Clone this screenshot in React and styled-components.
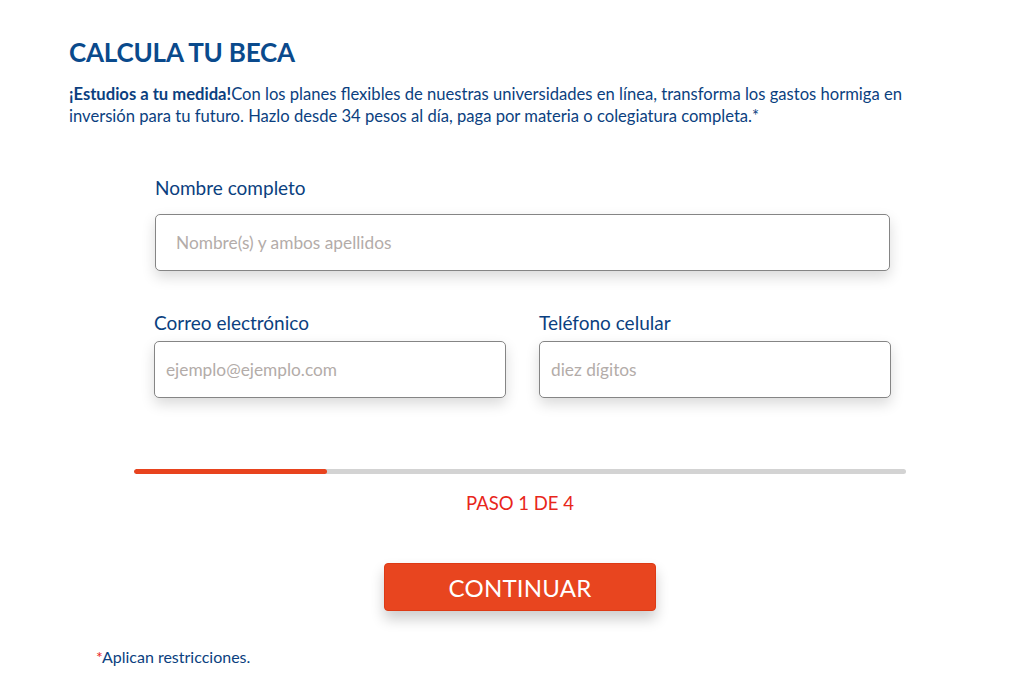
import React from "react";
import styled, { createGlobalStyle } from "styled-components";

const Global = createGlobalStyle`
  html, body { margin: 0; padding: 0; background: #ffffff; }
  body { font-family: Lato, "Open Sans", sans-serif; }
  * { box-sizing: border-box; }
`;

const Page = styled.main`
  width: 902px;
  margin-left: 69px;
  padding-top: 36px;
  padding-bottom: 20px;
`;

const Title = styled.h1`
  margin: 0;
  font-size: 26px;
  line-height: 32px;
  font-weight: 700;
  color: #0a4a8c;
  letter-spacing: -0.2px;
`;

const Intro = styled.p`
  margin: 15px 0 0;
  max-width: 850px;
  font-size: 16.6px;
  line-height: 22px;
  color: #0b3f80;
  b { font-weight: 700; }
`;

const Form = styled.form`
  width: 737px;
  margin: 48px 0 0 85px;
  display: flex;
  flex-direction: column;
  gap: 39px;
`;

const Row = styled.div`
  display: grid;
  grid-template-columns: ${(p) => (p.$cols === 2 ? "1fr 1fr" : "1fr")};
  column-gap: 33px;
`;

const Field = styled.label`
  display: flex;
  flex-direction: column;
  gap: ${(p) => (p.$wide ? "14px" : "6px")};
  padding-left: ${(p) => (p.$wide ? "1px" : "0")};
  padding-right: ${(p) => (p.$wide ? "1px" : "0")};
`;

const Label = styled.span`
  font-size: 19px;
  line-height: 25px;
  color: #0b3f80;
`;

const Input = styled.input`
  height: 57px;
  width: 100%;
  border: 1px solid #858585;
  border-radius: 5px;
  background: #fff;
  padding: 0 ${(p) => (p.$wide ? "20px" : "11px")};
  font-family: Lato, sans-serif;
  font-size: 17.3px;
  color: #333;
  box-shadow: 0 6px 14px rgba(0, 0, 0, 0.15);
  outline: none;
  &::placeholder { color: #b3aca9; }
`;

const Progress = styled.div`
  margin: 71px 0 0 65px;
  width: 772px;
  height: 5px;
  border-radius: 3px;
  background: #d3d3d3;
  overflow: hidden;
`;

const Fill = styled.div`
  height: 100%;
  border-radius: 3px;
  background: #e8431e;
`;

const Step = styled.div`
  margin-top: 17px;
  text-align: center;
  font-size: 18.5px;
  line-height: 24px;
  color: #e8261b;
`;

const Actions = styled.div`
  display: flex;
  justify-content: center;
  margin-top: 48px;
`;

const Button = styled.button`
  width: 272px;
  height: 48px;
  border: 1px solid #dd3a15;
  border-radius: 4px;
  background: #e8451f;
  color: #fff;
  font-family: Lato, sans-serif;
  font-size: 24px;
  letter-spacing: 0.2px;
  box-shadow: 0 8px 14px rgba(0, 0, 0, 0.2);
  cursor: pointer;
`;

const Note = styled.p`
  margin: 36px 0 0 27px;
  font-size: 16px;
  line-height: 20px;
  color: #0b3f80;
  span { color: #e8261b; }
`;

export default function App() {
  const step = 1;
  const total = 4;
  return (
    <>
      <Global />
      <Page>
        <Title>CALCULA TU BECA</Title>
        <Intro>
          <b>¡Estudios a tu medida!</b>Con los planes flexibles de nuestras universidades en línea, transforma los gastos hormiga en inversión para tu futuro. Hazlo desde 34 pesos al día, paga por materia o colegiatura completa.*
        </Intro>
        <Form onSubmit={(e) => e.preventDefault()}>
          <Row>
            <Field $wide>
              <Label>Nombre completo</Label>
              <Input $wide placeholder="Nombre(s) y ambos apellidos" />
            </Field>
          </Row>
          <Row $cols={2}>
            <Field>
              <Label>Correo electrónico</Label>
              <Input placeholder="ejemplo@ejemplo.com" />
            </Field>
            <Field>
              <Label>Teléfono celular</Label>
              <Input placeholder="diez dígitos" />
            </Field>
          </Row>
        </Form>
        <Progress>
          <Fill style={{ width: `${(step / total) * 100}%` }} />
        </Progress>
        <Step>PASO {step} DE {total}</Step>
        <Actions>
          <Button type="button">CONTINUAR</Button>
        </Actions>
        <Note><span>*</span>Aplican restricciones.</Note>
      </Page>
    </>
  );
}
